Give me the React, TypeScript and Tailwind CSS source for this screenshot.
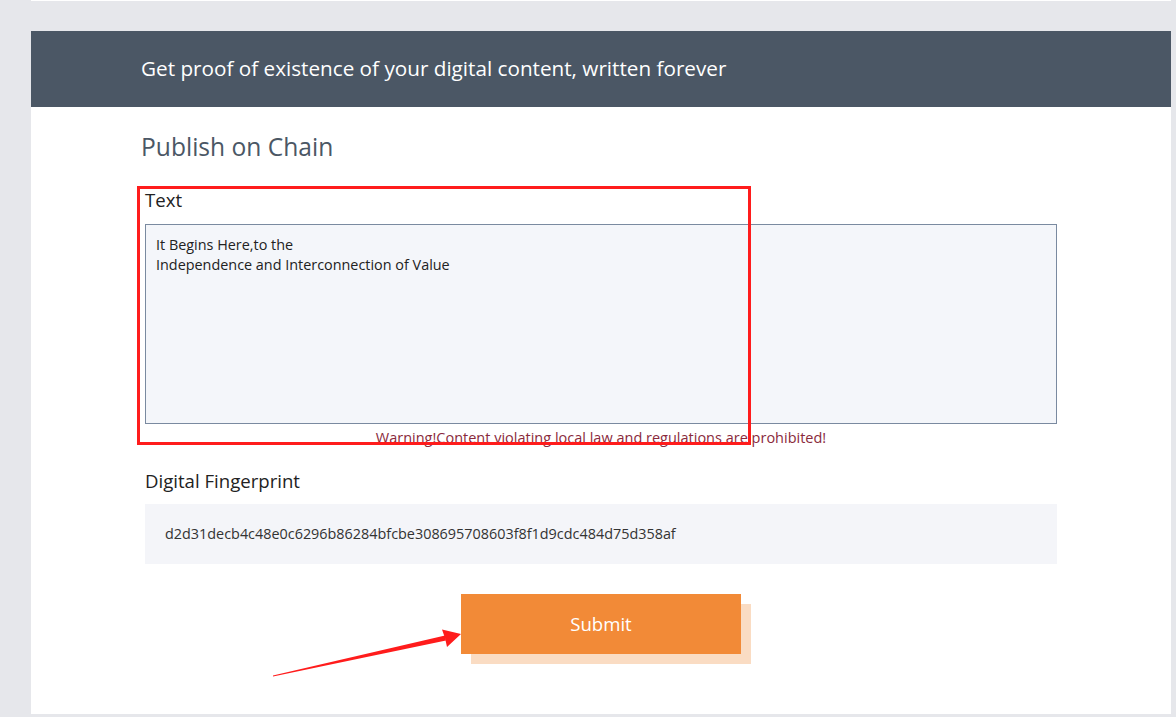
import React from "react";

const font = { fontFamily: '"Open Sans", "Noto Sans", Arial, sans-serif' };

export default function App() {
  return (
    <div className="min-h-[717px] w-[1176px] bg-[#e6e7eb] pl-[31px] pr-[5px] pb-[3px]" style={font}>
      <div className="relative h-[714px] bg-white pt-px">
        <div className="h-[30px] bg-[#e6e7eb]" />
        <div className="flex h-[76px] items-center bg-[#4b5765] pl-[110px]">
          <h1 className="text-[20.7px] text-white">Get proof of existence of your digital content, written forever</h1>
        </div>

        <div className="pl-[110px]">
          <h2 className="mt-[24px] text-[24.6px] leading-[32px] text-[#4b5765]">Publish on Chain</h2>

          <div className="ml-[4px] w-[912px]">
            <label className="mt-[25px] block text-[18.6px] leading-[24px] text-[#222]">Text</label>
            <div className="mt-[12px] h-[200px] border border-[#7a8aa0] bg-[#f4f6fa] px-[10px] py-[10px] text-[14.4px] leading-[20px] text-[#222]">
              <p>It Begins Here,to the</p>
              <p>Independence and Interconnection of Value</p>
            </div>
            <p className="mt-[4px] text-center text-[14.5px] leading-[20px] text-[#8a2a3c]">
              Warning!Content violating local law and regulations are prohibited!
            </p>

            <label className="mt-[21px] block text-[18.6px] leading-[24px] text-[#222]">Digital Fingerprint</label>
            <div className="mt-[11px] flex h-[60px] items-center bg-[#f4f5f9] px-[20px] text-[14.4px] text-[#333]">
              d2d31decb4c48e0c6296b86284bfcbe308695708603f8f1d9cdc484d75d358af
            </div>

            <div className="mt-[30px] flex justify-center">
              <button className="h-[60px] w-[280px] bg-[#f28a37] text-[18.6px] text-white shadow-[10px_10px_0_#fadcc3]">
                Submit
              </button>
            </div>
          </div>
        </div>

        {/* red annotation box */}
        <div className="absolute left-[106px] top-[186px] h-[259px] w-[614px] border-[3px] border-[#ff1c1c]" />
        {/* red annotation arrow */}
        <svg className="absolute left-[200px] top-[620px]" width="240" height="60" viewBox="0 0 240 60">
          <path d="M42 55.4 L214 15.5 L215 20.5 L42 56.6 Z" fill="#ff1c1c" />
          <path d="M230 14 L211 9.5 L214 18 L216 27 Z" fill="#ff1c1c" />
        </svg>
      </div>
    </div>
  );
}
